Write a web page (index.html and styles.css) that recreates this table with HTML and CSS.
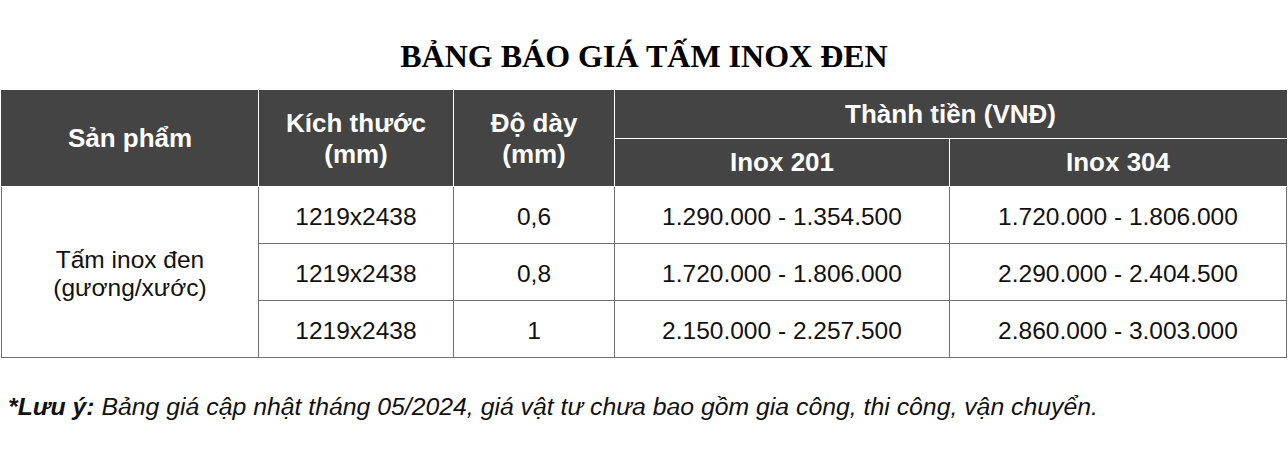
FILE: index.html
```html
<!DOCTYPE html>
<html lang="vi">
<head>
<meta charset="utf-8">
<link rel="stylesheet" href="styles.css">
</head>
<body>
<div class="page">
  <h1 class="title">BẢNG BÁO GIÁ TẤM INOX ĐEN</h1>
  <table class="price">
    <colgroup>
      <col class="c1"><col class="c2"><col class="c3"><col class="c4"><col class="c5">
    </colgroup>
    <thead>
      <tr class="h1">
        <th rowspan="2">Sản phẩm</th>
        <th rowspan="2">Kích thước<br>(mm)</th>
        <th rowspan="2">Độ dày<br>(mm)</th>
        <th colspan="2">Thành tiền (VNĐ)</th>
      </tr>
      <tr class="h2">
        <th>Inox 201</th>
        <th>Inox 304</th>
      </tr>
    </thead>
    <tbody>
      <tr>
        <td rowspan="3">Tấm inox đen<br>(gương/xước)</td>
        <td>1219x2438</td><td>0,6</td><td>1.290.000 - 1.354.500</td><td>1.720.000 - 1.806.000</td>
      </tr>
      <tr>
        <td>1219x2438</td><td>0,8</td><td>1.720.000 - 1.806.000</td><td>2.290.000 - 2.404.500</td>
      </tr>
      <tr>
        <td>1219x2438</td><td>1</td><td>2.150.000 - 2.257.500</td><td>2.860.000 - 3.003.000</td>
      </tr>
    </tbody>
  </table>
  <p class="note"><b>*Lưu ý:</b> Bảng giá cập nhật tháng 05/2024, giá vật tư chưa bao gồm gia công, thi công, vận chuyển.</p>
</div>
</body>
</html>
```
FILE: styles.css
```css
html, body { margin: 0; padding: 0; background: #fff; }
.page { padding: 0 1px; font-family: "Liberation Sans", Arial, sans-serif; color: #111; }
.title {
  margin: 0;
  padding-top: 38px;
  height: 52px;
  text-align: center;
  font-family: "Liberation Serif", "Times New Roman", serif;
  font-weight: bold;
  font-size: 32px;
  line-height: 36px;
  color: #000;
}
.price {
  width: 1285px;
  border-collapse: collapse;
  table-layout: fixed;
}
.c1 { width: 257px; } .c2 { width: 195px; } .c3 { width: 161px; } .c4 { width: 335px; } .c5 { width: 337px; }
.price th {
  background: #444;
  color: #fff;
  font-weight: bold;
  font-size: 26px;
  line-height: 31px;
  height: 47px;
  padding: 0;
  border: 1px solid #fff;
  border-top-color: #444;
  text-align: center;
  vertical-align: middle;
}
.price thead tr.h1 th:first-child { border-left-color: #444; }
.price thead tr.h1 th:last-child, .price thead tr.h2 th:last-child { border-right-color: #444; }
.price td {
  height: 53px;
  padding: 3px 0 0;
  border: 1px solid #707070;
  text-align: center;
  vertical-align: middle;
  font-size: 24.5px;
  line-height: 28px;
  color: #111;
}
.note {
  margin: 34px 0 0 7px;
  font-style: italic;
  font-size: 24.8px;
  line-height: 30px;
  color: #111;
}
.note b { font-weight: bold; }
```
